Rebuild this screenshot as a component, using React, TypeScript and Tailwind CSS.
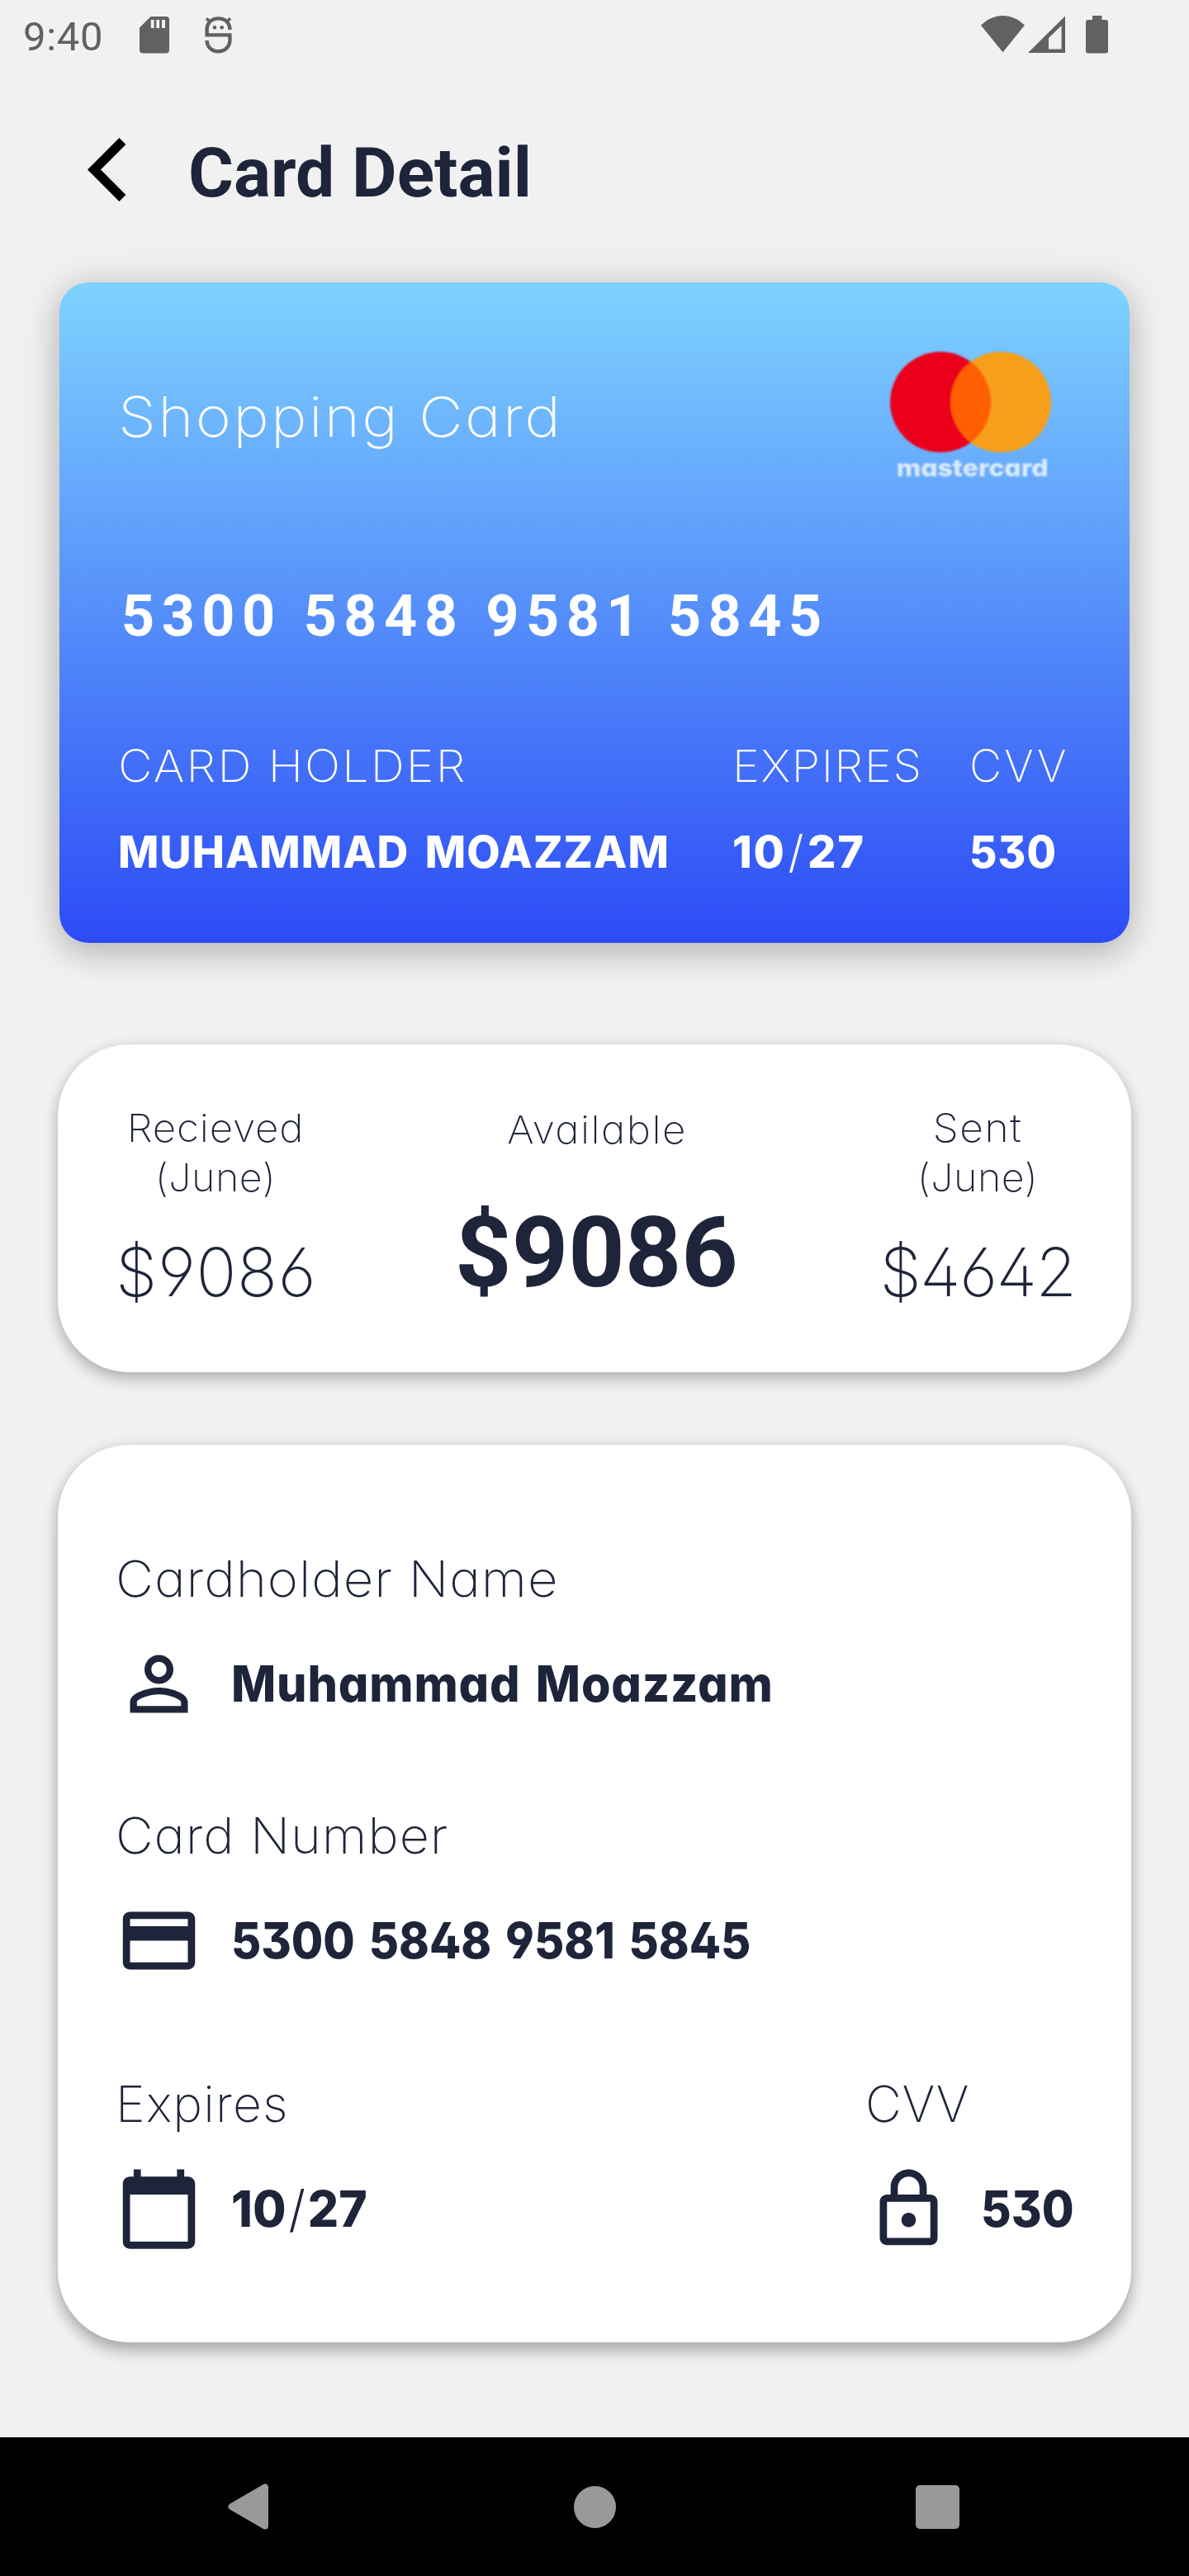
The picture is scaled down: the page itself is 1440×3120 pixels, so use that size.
import type { ReactNode } from "react";

const LIGHT =
  'font-["Inter",sans-serif] font-extralight whitespace-nowrap [font-feature-settings:"cv11","cv02","cv03","cv04","cv09"]';
const BOLD =
  'font-["Inter",sans-serif] font-extrabold whitespace-nowrap [font-feature-settings:"cv11","cv02","cv03","cv04","cv09"]';
const ROBOTO = 'font-["Roboto",sans-serif] whitespace-nowrap';

function SdCardIcon() {
  return (
    <svg className="h-[45px] w-[36px]" viewBox="0 0 36 45" fill="#616161" fillRule="evenodd">
      <path d="M13.6 0H32a4 4 0 0 1 4 4v36.5a4 4 0 0 1-4 4H4a4 4 0 0 1-4-4V13.6zM13.8 4v10h3.8V4zM20.3 4v10h3.8V4zM27 4v10h4V4z" />
    </svg>
  );
}

function DebugIcon() {
  return (
    <svg className="h-[45px] w-[33px]" viewBox="0 0 33 45" fill="none" stroke="#616161" strokeWidth="4.4">
      <path d="M30.4 16C30.4 7.5 24.5 2.4 16.5 2.4S2.6 7.5 2.6 16v6.4h27.8v6.2c0 8-6 13.7-13.9 13.7S2.6 36.8 2.6 29" />
      <path d="M2 2.3 6.5 6.5M31 2.3 26.5 6.5" strokeWidth="3.6" />
      <circle cx="12" cy="13.3" r="2.3" fill="#616161" stroke="none" />
      <circle cx="20.7" cy="13.3" r="2.3" fill="#616161" stroke="none" />
    </svg>
  );
}

function StatusBar() {
  return (
    <div className="flex h-[84px] items-start justify-between pl-[28px] pr-[98px]">
      <div className="flex items-start">
        <span className={`${ROBOTO} mt-[20px] w-[141px] text-[49px] leading-none tracking-[0.7px] text-[#616161]`}>
          9:40
        </span>
        <div className="mt-[20px] flex gap-[43px]">
          <SdCardIcon />
          <DebugIcon />
        </div>
      </div>
      <div className="mt-[19px] flex items-start text-[#616161]">
        <svg className="h-[45px] w-[53px]" viewBox="0 0 53 45" fill="currentColor">
          <path d="M0 11.6C8 4 17 0 26.5 0S45 4 53 11.6L26.5 44.3z" />
        </svg>
        <svg className="ml-[4px] h-[45px] w-[45px]" viewBox="0 0 45 45" fill="currentColor" fillRule="evenodd">
          <path d="M0 45h45V.6zM25 27 40.6 12v28.4H25z" />
        </svg>
        <svg className="ml-[25px] h-[46px] w-[27px]" viewBox="0 0 27 46" fill="currentColor">
          <path d="M8 0h11.5v5H24a3 3 0 0 1 3 3v34.5a3 3 0 0 1-3 3H3a3 3 0 0 1-3-3V8a3 3 0 0 1 3-3h5z" />
        </svg>
      </div>
    </div>
  );
}

function Header() {
  return (
    <header className="flex h-[258px] items-start pl-[106px]">
      <svg className="mt-[83px] h-[77px] w-[47px]" viewBox="0 0 47 77">
        <path d="M38.4 0 46.4 8 16 38.5 46.4 69 38.4 77 0 38.5z" />
      </svg>
      <h1 className={`${ROBOTO} ml-[75px] mt-[84px] text-[84px] leading-none font-bold`}>Card Detail</h1>
    </header>
  );
}

function MastercardLogo() {
  return (
    <div className="flex w-[195px] flex-col items-center blur-[0.8px]">
      <svg className="h-[124px] w-[195px]" viewBox="0 0 195 124">
        <circle cx="61" cy="62" r="61" fill="#eb001b" />
        <circle cx="134" cy="62" r="61" fill="#f79e1b" />
        <path d="M97.5 13.1a61 61 0 0 1 0 97.8 61 61 0 0 1 0-97.8z" fill="#ff5f00" />
      </svg>
      <span className={`${BOLD} mt-[3px] ml-[5px] scale-x-110 text-[29px] leading-none text-white/75`}>
        mastercard
      </span>
    </div>
  );
}

function ExpiryDate() {
  return (
    <>
      10<span className="mx-[3px] font-light">/</span>27
    </>
  );
}

function BankCard() {
  return (
    <section className="mx-[72px] h-[800px] rounded-[35px] bg-[linear-gradient(to_bottom,#7fd2ff,#2c4bf6)] pl-[71px] text-white shadow-[0_16px_36px_rgba(0,0,0,0.14),0_2px_50px_rgba(0,0,0,0.16)]">
      <div className="flex h-[242px] items-start justify-between pt-[83px] pr-[95px]">
        <div className={`${LIGHT} mt-[46px] origin-left scale-x-110 text-[67px] leading-none tracking-[2.1px]`}>
          Shopping Card
        </div>
        <MastercardLogo />
      </div>
      <div className={`${ROBOTO} mt-[127px] ml-[4px] text-[70px] leading-none font-bold tracking-[8.52px]`}>
        5300 5848 9581 5845
      </div>
      <div className="mt-[120px] grid grid-cols-[744px_287px_auto] gap-y-[50px] text-[54px] leading-none">
        <span className={`${LIGHT} origin-left scale-x-106 tracking-[2px]`}>CARD HOLDER</span>
        <span className={`${LIGHT} origin-left scale-x-103 tracking-[1.6px]`}>EXPIRES</span>
        <span className={`${LIGHT} tracking-[3.2px]`}>CVV</span>
        <span className={`${BOLD} origin-left scale-x-97 tracking-[1.1px] [word-spacing:7px]`}>MUHAMMAD MOAZZAM</span>
        <span className={`${BOLD} tracking-[1.7px]`}>
          <ExpiryDate />
        </span>
        <span className={`${BOLD} origin-left scale-x-95 tracking-[1.2px]`}>530</span>
      </div>
    </section>
  );
}

function Stats() {
  return (
    <section className="mx-[70px] mt-[123px] flex h-[397px] justify-between rounded-[87px] bg-white pt-[71px] pr-[65px] pl-[70px] text-center shadow-[0_10px_18px_rgba(0,0,0,0.19),0_2px_16px_rgba(0,0,0,0.13)]">
      <div className="w-[242px]">
        <div className={`${LIGHT} text-[47px] leading-[60px]`}>
          <div className="scale-x-105 tracking-[0.8px]">Recieved</div>
          <div className="scale-x-103 tracking-[0.5px]">(June)</div>
        </div>
        <div className={`${LIGHT} mt-[45px] text-[81px] leading-none tracking-[0.5px]`}>$9086</div>
      </div>
      <div className="w-[400px]">
        <div className={`${LIGHT} mt-[2px] scale-x-105 text-[47px] leading-[60px] tracking-[1.4px]`}>Available</div>
        <div className={`${ROBOTO} mt-[60px] text-[119.5px] leading-none font-bold`}>$9086</div>
      </div>
      <div className="w-[242px]">
        <div className={`${LIGHT} text-[47px] leading-[60px]`}>
          <div className="scale-x-106 tracking-[1.4px]">Sent</div>
          <div className="scale-x-103 tracking-[0.5px]">(June)</div>
        </div>
        <div className={`${LIGHT} mt-[45px] text-[81px] leading-none tracking-[-1.7px]`}>$4642</div>
      </div>
    </section>
  );
}

function Field({ label, icon, children }: { label: ReactNode; icon: string; children: ReactNode }) {
  return (
    <div>
      <div className={`${LIGHT} flex text-[60.5px] leading-none`}>{label}</div>
      <div className="mt-[44.5px] flex h-[105px] items-center gap-[35px]">
        <svg className="size-[105px] shrink-0" viewBox="0 0 24 24" fill="currentColor">
          <path d={icon} />
        </svg>
        <div className={`${BOLD} flex text-[60.5px] leading-none`}>{children}</div>
      </div>
    </div>
  );
}

const PERSON =
  "M12 5.9c1.16 0 2.1.94 2.1 2.1s-.94 2.1-2.1 2.1S9.9 9.16 9.9 8s.94-2.1 2.1-2.1m0 9c2.97 0 6.1 1.46 6.1 2.1v1.1H5.9V17c0-.64 3.13-2.1 6.1-2.1M12 4C9.79 4 8 5.79 8 8s1.79 4 4 4 4-1.79 4-4-1.79-4-4-4zm0 9c-2.67 0-8 1.34-8 4v3h16v-3c0-2.66-5.33-4-8-4z";
const CREDIT_CARD =
  "M20 4H4c-1.11 0-1.99.89-1.99 2L2 18c0 1.11.89 2 2 2h16c1.11 0 2-.89 2-2V6c0-1.11-.89-2-2-2zm0 14H4v-6h16v6zm0-10H4V6h16v2z";
const CALENDAR =
  "M20 3h-1V1h-2v2H7V1H5v2H4c-1.1 0-2 .9-2 2v16c0 1.1.9 2 2 2h16c1.1 0 2-.9 2-2V5c0-1.1-.9-2-2-2zm0 18H4V8h16v13z";
const LOCK =
  "M18 8h-1V6c0-2.76-2.24-5-5-5S7 3.24 7 6v2H6c-1.1 0-2 .9-2 2v10c0 1.1.9 2 2 2h12c1.1 0 2-.9 2-2V10c0-1.1-.9-2-2-2zM9 6c0-1.66 1.34-3 3-3s3 1.34 3 3v2H9V6zm9 14H6V10h12v10zm-6-3c1.1 0 2-.9 2-2s-.9-2-2-2-2 .9-2 2 .9 2 2 2z";

function Details() {
  return (
    <section className="mx-[70px] mt-[88px] h-[1087px] rounded-[87px] bg-white pt-[132px] pl-[70px] shadow-[0_12px_18px_rgba(0,0,0,0.22),0_2px_18px_rgba(0,0,0,0.14)]">
      <Field label={<span className="origin-left scale-x-105 tracking-[0.9px]">Cardholder Name</span>} icon={PERSON}>
        <span className="origin-left scale-x-95 tracking-[0.9px] [word-spacing:5px]">Muhammad Moazzam</span>
      </Field>
      <div className="mt-[100.5px]">
        <Field
          label={<span className="origin-left scale-x-104 tracking-[0.9px]">Card Number</span>}
          icon={CREDIT_CARD}
        >
          <span className="origin-left scale-x-92 [word-spacing:5px]">5300 5848 9581 5845</span>
        </Field>
      </div>
      <div className="mt-[115px] grid grid-cols-[908px_auto]">
        <Field label={<span className="tracking-[1.2px]">Expires</span>} icon={CALENDAR}>
          <span className="origin-left scale-x-97 whitespace-nowrap">
            <ExpiryDate />
          </span>
        </Field>
        <Field label={<span className="tracking-[0.6px]">CVV</span>} icon={LOCK}>
          <span className="origin-left scale-x-93">530</span>
        </Field>
      </div>
    </section>
  );
}

function NavBar() {
  return (
    <nav className="mt-[115px] flex h-[168px] items-center justify-between bg-black pr-[278px] pl-[276px]">
      <svg className="h-[58px] w-[50px]" viewBox="0 0 50 58" fill="#999" stroke="#999" strokeWidth="8" strokeLinejoin="round">
        <path d="M45 5.5v47L4.5 29z" />
      </svg>
      <div className="ml-[5px] size-[51px] rounded-full bg-[#999]" />
      <div className="size-[53px] rounded-[5px] bg-[#999]" />
    </nav>
  );
}

export default function App() {
  return (
    <div className="h-[3120px] w-[1440px] overflow-hidden bg-[#f1f1f1] text-[#1e2439]">
      <StatusBar />
      <Header />
      <BankCard />
      <Stats />
      <Details />
      <NavBar />
    </div>
  );
}
